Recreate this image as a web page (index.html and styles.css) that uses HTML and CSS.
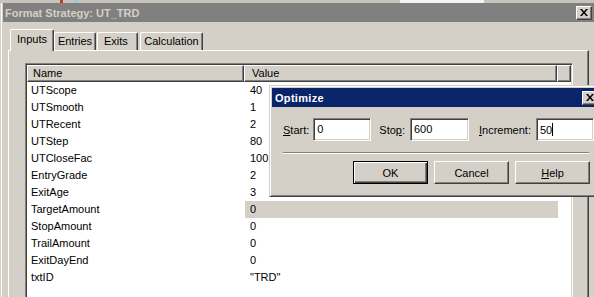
FILE: index.html
```html
<!DOCTYPE html>
<html lang="en">
<head>
  <meta charset="UTF-8">
  <title>Format Strategy: UT_TRD</title>
  <link rel="stylesheet" href="styles.css">
</head>
<body>

  <div class="top-strip"></div>

  <div class="win">
    <div class="win-title">
      <span>Format Strategy: UT_TRD</span>
      <button class="x-btn"><svg width="8" height="7" viewBox="0 0 8 7"><path d="M0 0h2l2 2.5L6 0h2L5 3.5 8 7H6L4 4.5 2 7H0l3-3.5z" fill="#000"/></svg></button>
    </div>

    <div class="win-body">
      <div class="tabs">
        <div class="tab active">Inputs</div>
        <div class="tab entries">Entries</div>
        <div class="tab exits">Exits</div>
        <div class="tab calc">Calculation</div>
      </div>

      <div class="tab-panel">
        <div class="list">
          <div class="list-head">
            <div class="hcell col-name">Name</div>
            <div class="hcell col-value">Value</div>
            <div class="hcell col-extra"></div>
          </div>
          <div class="row"><div class="col-name">UTScope</div><div class="col-value">40</div></div>
          <div class="row"><div class="col-name">UTSmooth</div><div class="col-value">1</div></div>
          <div class="row"><div class="col-name">UTRecent</div><div class="col-value">2</div></div>
          <div class="row"><div class="col-name">UTStep</div><div class="col-value">80</div></div>
          <div class="row"><div class="col-name">UTCloseFac</div><div class="col-value">100</div></div>
          <div class="row"><div class="col-name">EntryGrade</div><div class="col-value">2</div></div>
          <div class="row"><div class="col-name">ExitAge</div><div class="col-value">3</div></div>
          <div class="row"><div class="col-name">TargetAmount</div><div class="col-value selected">0</div></div>
          <div class="row"><div class="col-name">StopAmount</div><div class="col-value">0</div></div>
          <div class="row"><div class="col-name">TrailAmount</div><div class="col-value">0</div></div>
          <div class="row"><div class="col-name">ExitDayEnd</div><div class="col-value">0</div></div>
          <div class="row"><div class="col-name">txtID</div><div class="col-value">"TRD"</div></div>
        </div>
      </div>
    </div>
  </div>

  <!-- floating Optimize dialog over the strategy window -->
  <div class="dialog">
    <div class="dlg-title">
      <span>Optimize</span>
      <button class="x-btn"><svg width="8" height="7" viewBox="0 0 8 7"><path d="M0 0h2l2 2.5L6 0h2L5 3.5 8 7H6L4 4.5 2 7H0l3-3.5z" fill="#000"/></svg></button>
    </div>
    <div class="dlg-body">
      <div class="fields">
        <label class="lbl-start"><u>S</u>tart:</label>
        <div class="field f-start">0</div>
        <label class="lbl-stop">Sto<u>p</u>:</label>
        <div class="field f-stop">600</div>
        <label class="lbl-inc"><u>I</u>ncrement:</label>
        <div class="field f-inc">50<span class="caret"></span></div>
      </div>
      <div class="sep"></div>
      <div class="buttons">
        <button class="btn default">OK</button>
        <button class="btn">Cancel</button>
        <button class="btn"><u>H</u>elp</button>
      </div>
    </div>
  </div>

</body>
</html>
```

FILE: styles.css
```css
body {
  margin: 0;
  width: 594px;
  height: 297px;
  overflow: hidden;
  position: relative;
  background: #d4d0c8;
  color: #000;
  font-family: "Liberation Sans", Arial, sans-serif;
  font-size: 11px;
}
button {
  font-family: inherit;
  font-size: 11px;
  color: #000;
  padding: 0;
}
.top-strip {
  height: 3px;
  background: linear-gradient(to right, #c8c4bc 0 60px, #c0392b 60px 63px, #c8c4bc 63px 74px, #7fd6d6 74px 77px, #c8c4bc 77px 400px, #f4f4f4 400px 484px, #c8c4bc 484px);
}
.win {
  padding-left: 3px;
  background: linear-gradient(to right, #d4d0c8 1px, #fff 1px 2px, #d4d0c8 2px);
}
.win-title {
  height: 19px;
  background: #808080;
  color: #d4d0c8;
  font-weight: bold;
  display: flex;
  align-items: center;
  justify-content: space-between;
  padding: 0 2px 0 2px;
}
.x-btn {
  width: 16px;
  height: 14px;
  background: #d4d0c8;
  border: 1px solid;
  border-color: #fff #404040 #404040 #fff;
  box-shadow: inset -1px -1px 0 #808080;
  display: flex;
  align-items: center;
  justify-content: center;
}
.win-body {
  padding: 0 5px 0 5px;
}
.tabs {
  display: flex;
  align-items: flex-end;
  height: 29px;
  margin-bottom: -1px;
  padding-left: 2px;
  position: relative;
  z-index: 1;
}
.tab {
  box-sizing: border-box;
  height: 18px;
  margin-bottom: 1px;
  padding-top: 2px;
  text-align: center;
  background: #d4d0c8;
  border: 1px solid;
  border-color: #fff #404040 transparent #fff;
  border-bottom: none;
  border-radius: 2px 2px 0 0;
  box-shadow: inset -1px 0 0 #808080;
}
.tab.active {
  width: 44px;
  height: 22px;
  margin-bottom: 0;
  padding-top: 3px;
}
.tab.entries { width: 42px; }
.tab.exits { width: 41px; margin-left: 1px; text-align: left; padding-left: 6px; }
.tab.calc { width: 63px; margin-left: 2px; }
.tab-panel {
  box-sizing: border-box;
  height: 247px;
  border: 1px solid;
  border-color: #fff #404040 #404040 #fff;
  border-bottom: none;
  box-shadow: inset -1px 0 0 #808080;
  padding: 12px 15px 0 16px;
}
.list {
  box-sizing: border-box;
  height: 234px;
  background: #fff;
  border: 1px solid;
  border-color: #808080 #fff #fff #808080;
  border-bottom: none;
  box-shadow: inset 1px 1px 0 #404040, inset -1px 0 0 #d4d0c8;
  padding: 1px 1px 0 1px;
  overflow: hidden;
}
.list-head {
  display: flex;
  height: 17px;
}
.hcell {
  box-sizing: border-box;
  background: #d4d0c8;
  border: 1px solid;
  border-color: #fff #404040 #404040 #fff;
  box-shadow: inset -1px -1px 0 #808080;
  line-height: 14px;
}
.hcell.col-name { padding-left: 5px; }
.hcell.col-value { padding-left: 7px; }
.col-name { width: 217px; flex: none; padding-left: 4px; box-sizing: border-box; }
.col-value { width: 313px; flex: none; padding-left: 6px; box-sizing: border-box; }
.col-extra { flex: 1; }
.row {
  display: flex;
  height: 17px;
  line-height: 17px;
}
.row .col-value.selected {
  background: #d4d0c8;
  margin-left: 1px;
  padding-left: 5px;
}

.dialog {
  position: absolute;
  left: 269px;
  top: 85px;
  width: 334px;
  height: 112px;
  box-sizing: border-box;
  background: #d4d0c8;
  border: 1px solid;
  border-color: #d4d0c8 #404040 #404040 #d4d0c8;
  box-shadow: inset 1px 1px 0 #fff, inset -1px -1px 0 #808080;
  padding: 2px;
}
.dlg-title {
  height: 19px;
  background: #0a246a;
  color: #fff;
  font-weight: bold;
  letter-spacing: 0.3px;
  display: flex;
  align-items: center;
  justify-content: space-between;
  padding: 0 2px 0 3px;
}
.dlg-body {
  padding: 11px 0 0 11px;
}
.fields {
  display: flex;
  align-items: center;
  height: 23px;
}
.field {
  box-sizing: border-box;
  height: 23px;
  background: #fff;
  border: 1px solid;
  border-color: #808080 #fff #fff #808080;
  box-shadow: inset 1px 1px 0 #404040, inset -1px -1px 0 #d4d0c8;
  padding: 4px 0 0 3px;
}
.f-start { width: 58px; margin-left: 4px; }
.f-stop { width: 59px; margin-left: 5px; }
.f-inc { width: 58px; margin-left: 5px; }
.lbl-stop { margin-left: 8px; }
.lbl-inc { margin-left: 10px; }
.caret {
  display: inline-block;
  width: 1px;
  height: 13px;
  background: #000;
  vertical-align: -2px;
}
.sep {
  margin: 11px 11px 0 0;
  border-top: 1px solid #808080;
  border-bottom: 1px solid #fff;
  height: 0;
}
.buttons {
  display: flex;
  justify-content: flex-end;
  gap: 6px;
  margin: 7px 10px 0 0;
}
.btn {
  box-sizing: border-box;
  width: 75px;
  height: 23px;
  background: #d4d0c8;
  border: 1px solid;
  border-color: #fff #404040 #404040 #fff;
  box-shadow: inset -1px -1px 0 #808080;
}
.btn.default {
  border: 1px solid #000;
  box-shadow: inset 1px 1px 0 #fff, inset -1px -1px 0 #404040, inset -2px -2px 0 #808080;
}
```
